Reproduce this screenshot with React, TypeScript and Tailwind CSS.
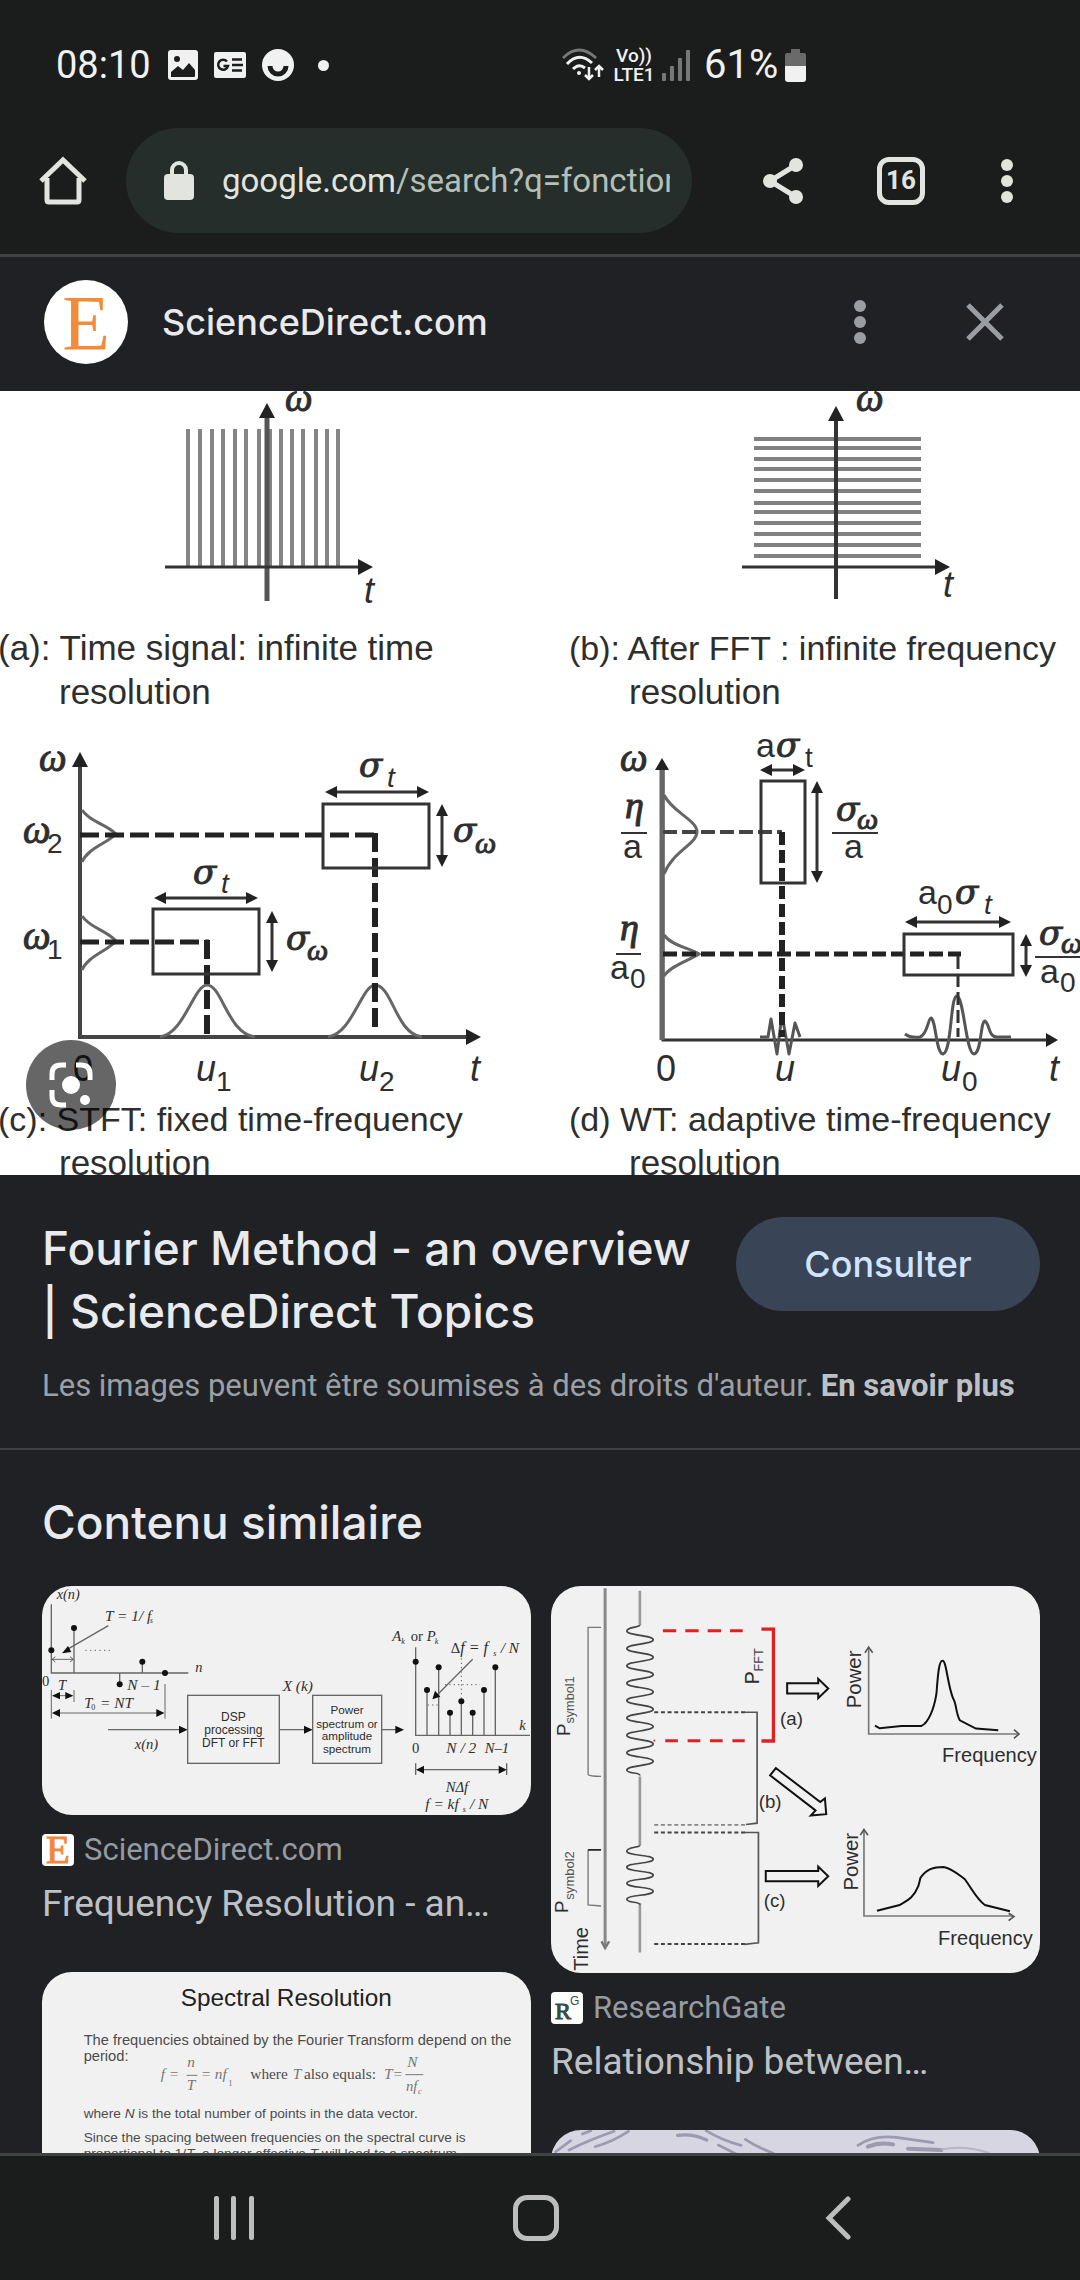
import type { ReactNode } from "react";

const SANS = '"Liberation Sans", Arial, sans-serif';
const SERIF = '"Liberation Serif", "Times New Roman", serif';
const SYMBOL = '"DejaVu Serif", "Liberation Serif", serif';

type LabelProps = {
  x: number;
  y: number;
  size?: number;
  serif?: boolean;
  symbol?: boolean;
  italic?: boolean;
  middle?: boolean;
  strong?: boolean;
  fill?: string;
  up?: boolean;
  children: ReactNode;
};

function Label({ x, y, size = 34, serif, symbol, italic, middle, strong, fill = "#2e2e2e", up, children }: LabelProps) {
  return (
    <text
      x={x}
      y={y}
      fontSize={size}
      fontFamily={symbol ? SYMBOL : serif ? SERIF : SANS}
      fontStyle={italic ? "italic" : "normal"}
      textAnchor={middle ? "middle" : "start"}
      fill={fill}
      stroke={strong ? fill : "none"}
      strokeWidth={1}
      transform={up ? `rotate(-90 ${x} ${y})` : undefined}
    >
      {children}
    </text>
  );
}

function Omega({ x, y, sub }: { x: number; y: number; sub?: boolean }) {
  return (
    <Label x={x} y={y} size={sub ? 30 : 39} serif italic strong>
      ω
    </Label>
  );
}

function Sigma({ x, y }: { x: number; y: number }) {
  return (
    <Label x={x} y={y} size={34} symbol italic strong>
      σ
    </Label>
  );
}

type Dir = "up" | "down" | "left" | "right";

function Head({ x, y, dir, l = 15, w = 8, fill = "#222" }: { x: number; y: number; dir: Dir; l?: number; w?: number; fill?: string }) {
  const d = {
    up: `M${x} ${y}l${w} ${l}h${-2 * w}z`,
    down: `M${x} ${y}l${w} ${-l}h${-2 * w}z`,
    left: `M${x} ${y}l${l} ${w}v${-2 * w}z`,
    right: `M${x} ${y}l${-l} ${w}v${-2 * w}z`,
  }[dir];
  return <path d={d} fill={fill} stroke="none" />;
}

function HSpan({ x1, x2, y }: { x1: number; x2: number; y: number }) {
  return (
    <g>
      <path d={`M${x1 + 8} ${y}H${x2 - 8}`} strokeWidth={3} />
      <Head x={x1} y={y} dir="left" l={12} w={6} />
      <Head x={x2} y={y} dir="right" l={12} w={6} />
    </g>
  );
}

function VSpan({ x, y1, y2 }: { x: number; y1: number; y2: number }) {
  return (
    <g>
      <path d={`M${x} ${y1 + 8}V${y2 - 8}`} strokeWidth={3} />
      <Head x={x} y={y1} dir="up" l={12} w={6} />
      <Head x={x} y={y2} dir="down" l={12} w={6} />
    </g>
  );
}

const combX = [188, 200, 212, 223, 235, 246, 259, 270, 281, 292, 303, 316, 327, 338];
const combY = [439, 448, 459, 469, 480, 491, 503, 512, 523, 534, 545, 556];

function MainFigure() {
  return (
    <svg viewBox="0 391 1080 784" className="block w-full bg-white" role="img" aria-label="Time-frequency resolution diagrams">
      <g fill="none" stroke="#333" strokeWidth={3}>
        <g>
          {combX.map((x) => (
            <path key={x} d={`M${x} 429V566`} stroke="#858585" strokeWidth={4} />
          ))}
          <path d="M267 412V601" strokeWidth={5} stroke="#555" />
          <path d="M165 567H362" />
          <Head x={267} y={403} dir="up" />
          <Head x={373} y={567} dir="right" />
          <Omega x={285} y={411} />
          <Label x={364} y={603} size={36} italic>t</Label>
          <Label x={-2} y={660} size={35}>(a): Time signal: infinite time</Label>
          <Label x={59} y={704} size={35}>resolution</Label>
        </g>
        <g>
          {combY.map((y) => (
            <path key={y} d={`M754 ${y}H921`} stroke="#808080" strokeWidth={4} />
          ))}
          <path d="M836 415V599" strokeWidth={4} />
          <path d="M742 567H940" />
          <Head x={836} y={406} dir="up" />
          <Head x={950} y={567} dir="right" />
          <Omega x={856} y={411} />
          <Label x={943} y={597} size={36} italic>t</Label>
          <Label x={569} y={660}>(b): After FFT : infinite frequency</Label>
          <Label x={629} y={704} size={35}>resolution</Label>
        </g>
        <g>
          <path d="M80 765V1037H470" strokeWidth={4} stroke="#444" />
          <Head x={80} y={752} dir="up" />
          <Head x={481} y={1037} dir="right" />
          <path d="M82 810C90 822 106 824 116 834C106 844 88 848 82 862M82 916C90 928 106 930 116 941C106 952 88 956 82 970" stroke="#666" strokeWidth={3} />
          <path d="M160 1037C184 1034 194 985 207 985C222 985 228 1034 255 1037M328 1037C352 1034 362 985 375 985C392 985 396 1034 422 1037" stroke="#666" strokeWidth={3} />
          <path d="M80 835H378M80 942H209" strokeWidth={5} strokeDasharray="19 6" stroke="#222" />
          <path d="M375 833V1030M207 940V1036" strokeWidth={6} strokeDasharray="19 6" stroke="#222" />
          <rect x={323} y={804} width={106} height={64} />
          <rect x={153} y={909} width={106} height={65} />
          <HSpan x1={325} x2={429} y={792} />
          <HSpan x1={154} x2={258} y={898} />
          <VSpan x={442} y1={804} y2={867} />
          <VSpan x={272} y1={911} y2={972} />
          <Omega x={39} y={771} />
          <Sigma x={359} y={777} />
          <Label x={387} y={787} size={28} italic>t</Label>
          <Sigma x={453} y={842} />
          <Omega x={475} y={853} sub />
          <Omega x={23} y={843} />
          <Label x={47} y={853} size={28}>2</Label>
          <Sigma x={193} y={884} />
          <Label x={221} y={893} size={28} italic>t</Label>
          <Sigma x={286} y={950} />
          <Omega x={307} y={960} sub />
          <Omega x={23} y={949} />
          <Label x={47} y={959} size={28}>1</Label>
          <Label x={73} y={1081} size={36}>0</Label>
          <Label x={196} y={1081} size={36} italic>u</Label>
          <Label x={216} y={1091} size={28}>1</Label>
          <Label x={359} y={1081} size={36} italic>u</Label>
          <Label x={379} y={1091} size={28}>2</Label>
          <Label x={470} y={1081} size={36} italic>t</Label>
          <Label x={-2} y={1131}>(c): STFT: fixed time-frequency</Label>
          <Label x={59} y={1175} size={35}>resolution</Label>
        </g>
        <g>
          <path d="M663 770V1040H1048" />
          <path d="M662 770V1040" strokeWidth={5} stroke="#666" />
          <Head x={662} y={758} dir="up" l={12} w={7} />
          <Head x={1058} y={1040} dir="right" l={12} w={7} />
          <path d="M664 795C672 812 697 820 697 832C697 844 672 852 664 874M664 935C672 946 690 948 699 954C690 960 670 966 664 976" stroke="#666" strokeWidth={3} />
          <path d="M760 1037H768L771 1019L777 1054L782 1015L789 1054L795 1023L800 1037" stroke="#555" strokeLinejoin="round" />
          <path d="M905 1034Q910 1038 920 1037C928 1034 928 1018 931 1018C936 1020 936 1054 943 1054C952 1052 950 996 957 996C964 998 966 1054 974 1054C982 1052 980 1022 985 1021C990 1024 988 1038 998 1037H1011" stroke="#555" />
          <path d="M663 832H782" strokeWidth={4} strokeDasharray="14 5" stroke="#444" />
          <path d="M782 832V1037" strokeWidth={6} strokeDasharray="13 5" stroke="#222" />
          <path d="M663 954H961" strokeWidth={5} strokeDasharray="14 5" stroke="#222" />
          <path d="M958 956V1037" strokeWidth={3} strokeDasharray="13 5" stroke="#333" />
          <rect x={761} y={781} width={44} height={102} />
          <rect x={904} y={934} width={109} height={41} />
          <HSpan x1={760} x2={805} y={770} />
          <HSpan x1={905} x2={1011} y={922} />
          <VSpan x={817} y1={781} y2={883} />
          <VSpan x={1026} y1={934} y2={977} />
          <path d="M832 833H878M621 833H647M616 954H641M1035 957H1080" strokeWidth={2} />
          <Omega x={620} y={771} />
          <Label x={756} y={757} size={34}>a</Label>
          <Sigma x={776} y={757} />
          <Label x={805} y={767} size={28}>t</Label>
          <Sigma x={836} y={821} />
          <Omega x={857} y={829} sub />
          <Label x={844} y={858} size={34}>a</Label>
          <Label x={625} y={818} size={38} serif italic strong>η</Label>
          <Label x={623} y={858} size={34}>a</Label>
          <Label x={620} y={940} size={38} serif italic strong>η</Label>
          <Label x={610} y={979} size={34}>a</Label>
          <Label x={630} y={988} size={28}>0</Label>
          <Label x={918} y={904} size={34}>a</Label>
          <Label x={937} y={914} size={28}>0</Label>
          <Sigma x={955} y={904} />
          <Label x={984} y={914} size={28} italic>t</Label>
          <Sigma x={1039} y={945} />
          <Omega x={1061} y={953} sub />
          <Label x={1040} y={983} size={34}>a</Label>
          <Label x={1060} y={992} size={28}>0</Label>
          <Label x={656} y={1081} size={36}>0</Label>
          <Label x={775} y={1081} size={36} italic>u</Label>
          <Label x={941} y={1081} size={36} italic>u</Label>
          <Label x={962} y={1091} size={28}>0</Label>
          <Label x={1049} y={1081} size={36} italic>t</Label>
          <Label x={569} y={1131}>(d) WT: adaptive time-frequency</Label>
          <Label x={629} y={1175} size={35}>resolution</Label>
        </g>
      </g>
    </svg>
  );
}

function stems(points: number[][], base: number) {
  return points.map(([x, y]) => (
    <g key={x}>
      <path d={`M${x} ${y}V${base}`} />
      <circle cx={x} cy={y} r={9} fill="#111" stroke="none" />
    </g>
  ));
}

function DspFigure() {
  return (
    <svg viewBox="36 48 1467 687" className="block w-full bg-[#f1f1f1]" role="img" aria-label="DSP spectrum diagram">
      <g fill="none" stroke="#666" strokeWidth={4}>
        <path d="M64 103V309H475" />
        {stems([[132, 174], [269, 343], [337, 275], [405, 309]], 309)}
        <circle cx={64} cy={241} r={9} fill="#111" stroke="none" />
        <path d="M235 167L112 238" />
        <path d="M96 250l18-22l10 18z" fill="#111" stroke="none" />
        <path d="M66 268H130M76 260l-10 8l10 8M120 260l10 8l-10 8" strokeWidth={3} />
        <path d="M166 241H240" strokeDasharray="4 10" strokeWidth={3} />
        <path d="M64 360V446M132 360V396M405 342V446M70 377H126M70 429H400" strokeWidth={3} />
        <Head x={66} y={377} dir="left" l={24} w={11} fill="#111" />
        <Head x={130} y={377} dir="right" l={24} w={11} fill="#111" />
        <Head x={66} y={429} dir="left" l={24} w={12} fill="#111" />
        <Head x={403} y={429} dir="right" l={24} w={12} fill="#111" />
        <path d="M234 479H455M748 479H830M1055 479H1100" />
        <Head x={473} y={479} dir="right" l={26} w={12} fill="#111" />
        <Head x={848} y={479} dir="right" l={26} w={12} fill="#111" />
        <Head x={1122} y={479} dir="right" l={26} w={12} fill="#111" />
        <rect x={473} y={376} width={275} height={204} />
        <rect x={848} y={376} width={207} height={204} />
        <path d="M1157 232V496H1500" />
        {stems([[1191, 360], [1226, 292], [1260, 428], [1294, 394], [1328, 428], [1362, 360], [1396, 292]], 496)}
        <circle cx={1157} cy={275} r={9} fill="#111" stroke="none" />
        <path d="M1328 268L1222 374M1157 580V615M1430 580V615M1165 599H1420" />
        <path d="M1207 388l8-26l16 18z" fill="#111" stroke="none" />
        <path d="M1193 405H1224M1294 265V385M1245 344H1350" strokeDasharray="4 9" strokeWidth={3} />
        <Head x={1158} y={599} dir="left" l={24} w={12} fill="#111" />
        <Head x={1430} y={599} dir="right" l={24} w={12} fill="#111" />
        <Label x={80} y={86} size={43} serif italic>x(n)</Label>
        <Label x={225} y={153} size={46} serif italic>T = 1/ f</Label>
        <Label x={360} y={160} size={22} serif italic>s</Label>
        <Label x={496} y={305} size={43} serif italic>n</Label>
        <Label x={36} y={347} size={44} serif>0</Label>
        <Label x={84} y={360} size={44} serif italic>T</Label>
        <Label x={292} y={360} size={46} serif italic>N – 1</Label>
        <Label x={163} y={413} size={44} serif italic>T</Label>
        <Label x={184} y={421} size={24} serif>0</Label>
        <Label x={210} y={413} size={46} serif italic>= NT</Label>
        <Label x={314} y={536} size={44} serif italic>x(n)</Label>
        <Label x={758} y={364} size={46} serif italic>X (k)</Label>
        <Label x={610} y={453} size={36} middle>DSP</Label>
        <Label x={610} y={493} size={36} middle>processing</Label>
        <Label x={610} y={531} size={36} middle>DFT or FFT</Label>
        <Label x={951} y={433} size={35} middle>Power</Label>
        <Label x={951} y={473} size={35} middle>spectrum or</Label>
        <Label x={951} y={511} size={35} middle>amplitude</Label>
        <Label x={951} y={550} size={35} middle>spectrum</Label>
        <Label x={1087} y={213} size={44} serif italic>A</Label>
        <Label x={1114} y={221} size={24} serif italic>k</Label>
        <Label x={1142} y={213} size={44} serif>or</Label>
        <Label x={1190} y={213} size={44} serif italic>P</Label>
        <Label x={1214} y={221} size={24} serif italic>k</Label>
        <Label x={1262} y={250} size={44} serif>Δ</Label>
        <Label x={1291} y={250} size={48} serif italic>f = f</Label>
        <Label x={1390} y={258} size={24} serif italic>s</Label>
        <Label x={1412} y={250} size={46} serif italic>/ N</Label>
        <Label x={1468} y={480} size={44} serif italic>k</Label>
        <Label x={1146} y={549} size={44} serif>0</Label>
        <Label x={1249} y={549} size={46} serif italic>N / 2</Label>
        <Label x={1364} y={549} size={44} serif italic>N–1</Label>
        <Label x={1247} y={665} size={44} serif italic>NΔf</Label>
        <Label x={1186} y={718} size={46} serif italic>f = kf</Label>
        <Label x={1298} y={726} size={24} serif italic>s</Label>
        <Label x={1320} y={718} size={46} serif italic>/ N</Label>
      </g>
    </svg>
  );
}

function coil(top: number, step: number, turns: number) {
  let d = `M302 ${top}C302 ${top + 8} 263 ${top + 4} 263 ${top + 18}`;
  let y = top + 18;
  for (let i = 0; i < turns; i++) {
    const h = step / 2;
    d += `C263 ${y + 14} 342 ${y + h - 14} 342 ${y + h}C342 ${y + h + 14} 263 ${y + step - 14} 263 ${y + step}`;
    y += step;
  }
  return d + `C263 ${y + 12} 302 ${y + 6} 302 ${y + 16}`;
}

function SymbolFigure() {
  return (
    <svg viewBox="36 48 1464 1158" className="block w-full bg-[#f1f1f1]" role="img" aria-label="Symbol period and FFT window diagram">
      <g fill="none" stroke="#444" strokeWidth={5}>
        <path d="M198 55V1125" stroke="#888" strokeWidth={9} />
        <path d="M187 1112l11 20l12-20" stroke="#777" strokeWidth={7} />
        <path d="M302 62V165M302 618V825M302 998V1145" stroke="#999" strokeWidth={8} />
        <path d={coil(165, 52, 8)} />
        <path d={coil(824, 48, 3)} />
        <path d="M186 172H147V612Q150 618 186 618M147 838V1003L186 1006" stroke="#777" strokeWidth={4} />
        <path d="M147 838H186" stroke="#222" />
        <path d="M371 182H610" stroke="#e02020" strokeWidth={9} strokeDasharray="40 27" />
        <path d="M378 511H616" stroke="#e02020" strokeWidth={9} strokeDasharray="38 29" />
        <path d="M343 511h5" stroke="#e02020" />
        <path d="M666 177H702V512H666" stroke="#e02020" strokeWidth={10} />
        <path d="M345 426H625M345 786H625M345 1120H625" strokeDasharray="12 8" strokeWidth={6} />
        <path d="M345 763H625" strokeDasharray="12 8" stroke="#888" />
        <path d="M615 426H653V758L620 762M615 786H657V1116L615 1121" stroke="#555" />
        <g stroke="#111" strokeWidth={6}>
          <path d="M743 339H836V326L866 355L836 384V370H743z" />
          <path d="M679 901H836V888L866 917L836 946V932H679z" />
          <path d="M709 593L842 695L856 684L860 731L814 735L828 720L692 615z" />
          <path d="M1006 466L1020 474L1085 467H1145C1165 458 1182 420 1190 370C1194 320 1197 271 1208 272C1220 270 1222 340 1240 385C1250 400 1248 430 1260 450L1308 475L1375 480" />
          <path d="M1012 1020L1080 1003C1100 990 1120 985 1136 946L1142 922C1160 896 1180 889 1212 889C1240 895 1260 915 1275 926C1300 960 1310 985 1335 1003L1410 1022" />
        </g>
        <path d="M987 232V491H1433M973 778V1036H1420" stroke="#777" />
        <path d="M976 248l11-17l12 17M1422 478l15 13l-15 13M962 794l11-17l12 17M1406 1028l16 10l-16 12" stroke="#555" />
        <Label x={93} y={497} size={56} up>P</Label>
        <Label x={105} y={460} size={38} up fill="#555">symbol1</Label>
        <Label x={88} y={1027} size={56} up>P</Label>
        <Label x={104} y={987} size={39} up fill="#555">symbol2</Label>
        <Label x={658} y={342} size={58} up>P</Label>
        <Label x={672} y={304} size={38} up fill="#444">FFT</Label>
        <Label x={146} y={1200} size={60} up>Time</Label>
        <Label x={964} y={414} size={61} up>Power</Label>
        <Label x={954} y={960} size={61} up>Power</Label>
        <Label x={722} y={464} size={56}>(a)</Label>
        <Label x={658} y={713} size={56}>(b)</Label>
        <Label x={673} y={1008} size={56}>(c)</Label>
        <Label x={1207} y={576} size={60}>Frequency</Label>
        <Label x={1195} y={1122} size={60}>Frequency</Label>
      </g>
    </svg>
  );
}

function SpectralFigure() {
  const c = "#4c4c4c";
  const m = "#777";
  return (
    <svg viewBox="36 36 1467 1100" className="block w-full bg-[#f1f1f1]" role="img" aria-label="Spectral Resolution slide">
      <Label x={769} y={139} size={73} middle fill="#222">Spectral Resolution</Label>
      <Label x={161} y={256} size={44} fill={c}>The frequencies obtained by the Fourier Transform depend on the</Label>
      <Label x={161} y={303} size={44} fill={c}>period:</Label>
      <Label x={392} y={358} size={46} serif italic fill={m}>f  =</Label>
      <Label x={472} y={322} size={46} serif italic fill={m}>n</Label>
      <Label x={470} y={390} size={46} serif italic fill={m}>T</Label>
      <path d="M470 346H502M1126 344H1180" stroke={m} strokeWidth={3} />
      <Label x={512} y={358} size={46} serif italic fill={m}>= nf</Label>
      <Label x={595} y={378} size={26} serif fill={m}>1</Label>
      <Label x={661} y={357} size={46} serif fill={c}>where</Label>
      <Label x={788} y={357} size={46} serif italic fill={m}>T</Label>
      <Label x={822} y={357} size={46} serif fill={c}>also equals:</Label>
      <Label x={1062} y={357} size={46} serif italic fill={m}>T=</Label>
      <Label x={1132} y={322} size={46} serif italic fill={m}>N</Label>
      <Label x={1128} y={394} size={44} serif italic fill={m}>nf</Label>
      <Label x={1164} y={402} size={26} serif italic fill={m}>c</Label>
      <Label x={161} y={474} size={41} fill={c}>
        where <tspan fontStyle="italic">N</tspan> is the total number of points in the data vector.
      </Label>
      <Label x={161} y={546} size={41} fill={c}>Since the spacing between frequencies on the spectral curve is</Label>
      <Label x={161} y={593} size={41} fill={c}>
        proportional to 1/<tspan fontStyle="italic">T</tspan>, a longer effective <tspan fontStyle="italic">T</tspan> will lead to a spectrum
      </Label>
    </svg>
  );
}

function BrushFigure() {
  return (
    <svg viewBox="36 480 1464 900" className="block w-full bg-[#d6d5e2]" role="img" aria-label="Flow pattern">
      <g fill="none" stroke="#9c99b0" strokeLinecap="round" strokeWidth={8}>
        <path d="M50 545L95 512M90 540Q150 510 225 484M168 530Q220 515 268 484M130 492L155 482" />
        <path d="M415 496Q460 490 502 510" strokeWidth={10} />
        <path d="M500 482Q550 512 605 526M537 525L590 552M618 508Q650 530 702 550" />
        <path d="M955 526Q1000 494 1070 502L1180 518" />
        <path d="M985 530Q1020 515 1060 523M1105 536L1205 540" strokeWidth={12} />
        <path d="M1205 538Q1270 525 1345 548" stroke="#b5b3c4" strokeWidth={6} />
      </g>
    </svg>
  );
}

function Favicon({ kind }: { kind: "e" | "rg" }) {
  return (
    <svg viewBox="0 0 32 32" className="size-8 shrink-0 rounded bg-white" aria-hidden="true">
      {kind === "e" ? (
        <text x="16" y="29" fontSize="39" textAnchor="middle" fontFamily={SERIF} fill="#f0873a" stroke="#f0873a">E</text>
      ) : (
        <>
          <text x="4" y="27" fontSize="24" fontFamily={SERIF} fill="#344b48" stroke="#344b48">R</text>
          <text x="19" y="13" fontSize="12" fontFamily={SANS} fill="#344b48">G</text>
        </>
      )}
    </svg>
  );
}

function ResultCard({ figure, icon, site, title }: { figure: ReactNode; icon: "e" | "rg"; site: string; title: string }) {
  return (
    <a href="#result" className="flex flex-col">
      <span className="overflow-hidden rounded-[30px]">{figure}</span>
      <span className="mt-[19px] flex h-8 items-center gap-[10px] text-[31px] leading-8 text-[#969ba1]">
        <Favicon kind={icon} />
        {site}
      </span>
      <span className="mt-[14px] truncate pb-11 text-[37px] leading-[48px] text-[#bdc1c6]">{title}</span>
    </a>
  );
}

function Dots({ className }: { className: string }) {
  return (
    <svg viewBox="0 0 12 44" className={className} fill="currentColor" aria-hidden="true">
      <circle cx="6" cy="6" r="6" />
      <circle cx="6" cy="22" r="6" />
      <circle cx="6" cy="38" r="6" />
    </svg>
  );
}

function StatusBar() {
  return (
    <div className="flex h-32 items-center pl-14 pt-[2px] text-[38px] text-[#f1f1f1]">
      <span className="w-[112px]">08:10</span>
      <svg viewBox="0 0 30 30" className="size-[30px]" aria-hidden="true">
        <rect width="30" height="30" rx="3" fill="currentColor" />
        <circle cx="9" cy="9" r="3" fill="#1b1d1c" />
        <path d="M3 27V22L10 16L15 20L21 13L27 20V26Q27 27 26 27z" fill="#1b1d1c" />
      </svg>
      <svg viewBox="0 0 32 26" className="ml-4 h-[26px] w-8" aria-hidden="true">
        <rect width="32" height="26" rx="2" fill="currentColor" />
        <path d="M13 9.500A5 5 0 1 0 14 14H9.500M18 7.500H28M18 13H29M18 18.500H28" fill="none" stroke="#1b1d1c" strokeWidth="2.500" />
      </svg>
      <svg viewBox="0 0 32 32" className="ml-4 size-8" aria-hidden="true">
        <circle cx="16" cy="16" r="16" fill="currentColor" />
        <path d="M8 17A8 8 0 0 0 24 17" fill="none" stroke="#1b1d1c" strokeWidth="5" />
      </svg>
      <span className="ml-6 size-[11px] rounded-full bg-[#f1f1f1]" />
      <svg viewBox="0 0 42 34" className="ml-[233px] h-[34px] w-[42px]" fill="none" stroke="currentColor" strokeWidth="3" aria-hidden="true">
        <path d="M1 10Q17 -6 34 10" stroke="#777" />
        <path d="M5 16Q17 3 30 15M11 21Q17 15 23 20" />
        <circle cx="17" cy="25" r="2" fill="currentColor" stroke="none" />
        <path d="M27 19V31M23 27L27 31L31 27M37 29V18M33 22L37 18L41 22" strokeWidth="2.500" />
      </svg>
      <span className="ml-[10px] flex w-10 flex-col items-center text-[19px] font-medium leading-[19px]">
        <span>Vo))</span>
        <span>LTE1</span>
      </span>
      <svg viewBox="0 0 28 31" className="ml-2 h-[31px] w-7" fill="#777" aria-hidden="true">
        <rect x="0" y="23" width="4" height="8" rx="1" />
        <rect x="8" y="16" width="4" height="15" rx="1" />
        <rect x="16" y="8" width="4" height="23" rx="1" />
        <rect x="24" y="0" width="4" height="31" rx="1" />
      </svg>
      <span className="ml-[14px] text-[40px]">61%</span>
      <svg viewBox="0 0 21 33" className="ml-[7px] h-[33px] w-[21px]" aria-hidden="true">
        <path d="M6 0H15V4H19Q21 4 21 6V17H0V6Q0 4 2 4H6z" fill="#6a6a6a" />
        <path d="M0 17H21V30Q21 33 18 33H3Q0 33 0 30z" fill="currentColor" />
      </svg>
    </div>
  );
}

function Toolbar() {
  return (
    <div className="flex h-[126px] items-start pr-[26px] text-[#e1e4df]">
      <button aria-label="Home" className="flex h-[105px] w-[126px] items-center justify-center">
        <svg viewBox="0 0 48 50" className="h-[50px] w-12" fill="none" stroke="currentColor" strokeWidth="5" strokeLinejoin="round" aria-hidden="true">
          <path d="M2 25L24 4L46 25" strokeLinejoin="miter" />
          <path d="M8 22V44Q8 46 10 46H38Q40 46 40 44V22" />
        </svg>
      </button>
      <button className="flex h-[105px] min-w-0 flex-1 items-center rounded-full bg-[#252e2a] pl-[38px] pr-[22px] text-left">
        <svg viewBox="0 0 30 40" className="h-10 w-[30px] shrink-0" aria-hidden="true">
          <rect y="13" width="30" height="26" rx="4" fill="currentColor" />
          <path d="M8 14V9A7 7 0 0 1 22 9V14" fill="none" stroke="currentColor" strokeWidth="4" />
        </svg>
        <span className="ml-7 overflow-hidden whitespace-nowrap text-[33px] text-[#b5bfb9]">
          <span className="text-[#e1e4df]">google.com</span>/search?q=fonction
        </span>
      </button>
      <button aria-label="Share" className="ml-8 flex h-[105px] w-[118px] items-center justify-center">
        <svg viewBox="0 0 40 46" className="h-[46px] w-10" fill="currentColor" aria-hidden="true">
          <path d="M33 7L7 23L33 39" fill="none" stroke="currentColor" strokeWidth="5" />
          <circle cx="33" cy="7" r="7" />
          <circle cx="7" cy="23" r="7" />
          <circle cx="33" cy="39" r="7" />
        </svg>
      </button>
      <button aria-label="Tabs" className="flex h-[105px] w-[118px] items-center justify-center">
        <span className="flex size-12 items-center justify-center rounded-xl border-[5px] border-[#e1e4df] text-[26px] font-bold">16</span>
      </button>
      <button aria-label="Menu" className="flex h-[105px] w-[94px] items-center justify-center">
        <Dots className="h-11 w-3" />
      </button>
    </div>
  );
}

function SourceHeader() {
  return (
    <header className="flex h-[137px] items-center border-t-[3px] border-[#3f4342] pb-1 pl-11 pr-[38px]">
      <svg viewBox="0 0 84 84" className="size-[84px] rounded-full bg-white" aria-hidden="true">
        <text x="42" y="69" fontSize="78" textAnchor="middle" fontFamily={SERIF} fill="#f28c3a">E</text>
      </svg>
      <span className="ml-[34px] flex-1 font-['Inter',sans-serif] text-[36px] font-medium text-[#e8eaed]">ScienceDirect.com</span>
      <button aria-label="More options" className="flex size-[115px] items-center justify-center text-[#9a9da2]">
        <Dots className="h-11 w-3" />
      </button>
      <button aria-label="Close" className="ml-[10px] flex size-[115px] items-center justify-center text-[#9a9da2]">
        <svg viewBox="0 0 38 38" className="size-[38px]" stroke="currentColor" strokeWidth="5" aria-hidden="true">
          <path d="M2 2L36 36M36 2L2 36" />
        </svg>
      </button>
    </header>
  );
}

export default function App() {
  return (
    <div className="flex h-screen flex-col overflow-hidden bg-[#202124] font-['Roboto',sans-serif]">
      <div className="shrink-0 bg-[#1b1d1c]">
        <StatusBar />
        <Toolbar />
      </div>
      <main className="min-h-0 flex-1 overflow-hidden">
        <SourceHeader />
        <div className="relative">
          <MainFigure />
          <button aria-label="Search inside image" className="absolute bottom-[45px] left-[26px] flex size-[90px] items-center justify-center rounded-full bg-black/60">
            <svg viewBox="0 0 44 46" className="h-[46px] w-11" fill="none" stroke="#fff" strokeWidth="5" aria-hidden="true">
              <path d="M3 18V12Q3 3 12 3H17M27 3H32Q41 3 41 12V18M3 28V34Q3 43 12 43H17" />
              <circle cx="22" cy="23" r="9" fill="#fff" stroke="none" />
              <circle cx="36" cy="38" r="5" fill="#fff" stroke="none" />
            </svg>
          </button>
        </div>
        <section className="border-b-2 border-[#3c4043] pb-11 pl-[42px] pr-10 pt-[42px]">
          <div className="flex items-start justify-between">
            <h1 className="font-['Inter',sans-serif] text-[46px] font-medium leading-[63px] text-[#e8eaed]">
              Fourier Method - an overview
              <br />| ScienceDirect Topics
            </h1>
            <button className="-ml-5 h-[94px] w-[304px] shrink-0 rounded-full bg-[#394457] font-['Inter',sans-serif] text-[36px] font-medium text-[#d2e3fc]">Consulter</button>
          </div>
          <p className="mt-[25px] text-[31px] leading-9 text-[#9aa0a6]">
            Les images peuvent être soumises à des droits d'auteur.{" "}
            <a href="#more" className="font-bold text-[#bdc1c6]">En savoir plus</a>
          </p>
        </section>
        <section className="pl-[42px] pr-10">
          <h2 className="pb-[33px] pt-[41px] font-['Inter',sans-serif] text-[46px] font-medium leading-[62px] text-[#e8eaed]">Contenu similaire</h2>
          <div className="grid grid-cols-2 items-start gap-5">
            <div className="flex flex-col">
              <ResultCard figure={<DspFigure />} icon="e" site="ScienceDirect.com" title="Frequency Resolution - an…" />
              <a href="#result" className="overflow-hidden rounded-[30px]">
                <SpectralFigure />
              </a>
            </div>
            <div className="flex flex-col">
              <ResultCard figure={<SymbolFigure />} icon="rg" site="ResearchGate" title="Relationship between…" />
              <a href="#result" className="overflow-hidden rounded-[30px]">
                <BrushFigure />
              </a>
            </div>
          </div>
        </section>
      </main>
      <nav className="flex h-[127px] shrink-0 items-center justify-between border-t-[3px] border-[#3f4443] bg-[#1b1d1c] pl-[174px] pr-[182px] text-[#bdbdbd]">
        <button aria-label="Recent apps" className="flex h-full w-[120px] items-center justify-center">
          <svg viewBox="0 0 40 44" className="h-11 w-10" fill="currentColor" aria-hidden="true">
            <rect x="0" width="5" height="44" rx="2" />
            <rect x="17" width="5" height="44" rx="2" />
            <rect x="35" width="5" height="44" rx="2" />
          </svg>
        </button>
        <button aria-label="Home screen" className="flex h-full w-[120px] items-center justify-center">
          <span className="size-[46px] rounded-[14px] border-[5px] border-[#bdbdbd]" />
        </button>
        <button aria-label="Back" className="flex h-full w-[120px] items-center justify-center">
          <svg viewBox="0 0 26 44" className="h-11 w-[26px]" fill="none" stroke="currentColor" strokeWidth="5" strokeLinecap="round" aria-hidden="true">
            <path d="M23 3L4 22L23 41" />
          </svg>
        </button>
      </nav>
    </div>
  );
}
